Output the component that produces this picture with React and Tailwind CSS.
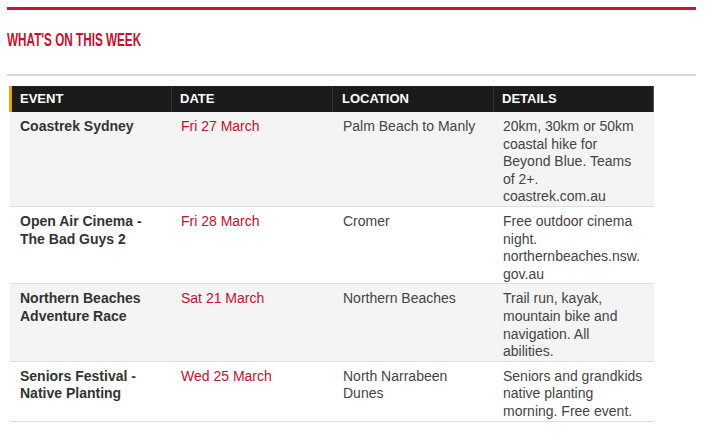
const events = [
  {
    name: "Coastrek Sydney",
    date: "Fri 27 March",
    location: "Palm Beach to Manly",
    details: "20km, 30km or 50km coastal hike for Beyond Blue. Teams of 2+. coastrek.com.au",
  },
  {
    name: "Open Air Cinema - The Bad Guys 2",
    date: "Fri 28 March",
    location: "Cromer",
    details: "Free outdoor cinema night. northernbeaches.nsw.gov.au",
  },
  {
    name: "Northern Beaches Adventure Race",
    date: "Sat 21 March",
    location: "Northern Beaches",
    details: "Trail run, kayak, mountain bike and navigation. All abilities.",
  },
  {
    name: "Seniors Festival - Native Planting",
    date: "Wed 25 March",
    location: "North Narrabeen Dunes",
    details: "Seniors and grandkids native planting morning. Free event.",
  },
];

const cols = "grid grid-cols-[162px_161px_161px_161px]";

export default function App() {
  return (
    <div className="min-h-screen bg-white pl-[7px] pr-[9px] pt-[7px] font-['Liberation_Sans',Arial,sans-serif]">
      <div className="h-[3px] bg-[#d0103a]" />

      <h2 className="mt-[19px] h-[21px] whitespace-nowrap">
        <span className="inline-block origin-left scale-x-[0.67] text-[17.5px] leading-[20px] font-bold uppercase text-[#c8102e]">
          What's on this week
        </span>
      </h2>

      <div className="mt-[24px] h-[2px] bg-[#d6d6d6]" />

      <div className="mt-[10px] ml-[2px] w-[645px]">
        <div className={`${cols} h-[26px] bg-[#1b1b1b] text-[13px] font-bold text-white`}>
          <div className="flex items-center border-l-[3px] border-[#e8a317] pl-[8px]">EVENT</div>
          <div className="flex items-center border-l border-[#333] pl-[8px]">DATE</div>
          <div className="flex items-center border-l border-[#333] pl-[9px]">LOCATION</div>
          <div className="flex items-center border-l border-r border-[#333] border-r-[#555] pl-[8px]">DETAILS</div>
        </div>

        {events.map((e, i) => (
          <div
            key={i}
            className={`${cols} ml-px border-b border-[#dedede] pt-[6px] text-[14px] leading-[17.6px] ${
              i % 2 === 0 ? "bg-[#f4f4f4]" : "bg-white"
            }`}
          >
            <div className="pl-[10px] pr-[12px] font-bold text-[#333]">{e.name}</div>
            <div className="pl-[9px] pr-[12px] text-[#c8102e]">{e.date}</div>
            <div className="pl-[10px] pr-[10px] text-[#444]">{e.location}</div>
            <div className="pl-[9px] pr-[12px] break-words text-[#444]">{e.details}</div>
          </div>
        ))}
      </div>
    </div>
  );
}
